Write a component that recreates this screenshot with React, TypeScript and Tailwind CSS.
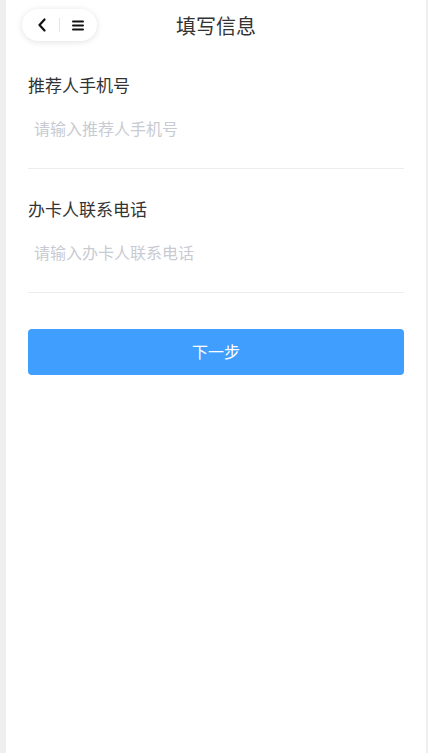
import React from "react";

const font = { fontFamily: '"Noto Sans CJK SC", "Noto Sans", sans-serif' };

function Field({ label, placeholder }: { label: string; placeholder: string }) {
  return (
    <div className="pt-[28px] pb-[18px] border-b border-[#ebedf0]">
      <div className="h-[24px] leading-[24px] text-[17px] text-[#333333]">{label}</div>
      <input
        className="mt-[9px] block h-[44px] w-full pl-[6px] text-[16px] text-[#333] outline-none bg-transparent placeholder:text-[#c8cbd2]"
        placeholder={placeholder}
        style={font}
      />
    </div>
  );
}

export default function App() {
  return (
    <div className="min-h-[753px] w-[428px] bg-[#efefef]" style={font}>
      <div className="ml-[6px] w-[420px] min-h-[753px] bg-white">
        <div className="relative flex h-[45px] items-center justify-center">
          <div className="absolute left-[16px] top-[9px] flex h-[32px] w-[75px] items-center rounded-full bg-white shadow-[0_1px_6px_rgba(0,0,0,0.12)]">
            <div className="flex w-[37px] items-center justify-center pl-[2px]">
              <svg width="10" height="14" viewBox="0 0 10 14">
                <path d="M7.5 1.5 L2.5 7 L7.5 12.5" fill="none" stroke="#111" strokeWidth="2.2" strokeLinecap="round" strokeLinejoin="round" />
              </svg>
            </div>
            <div className="h-[14px] w-px bg-[#e5e5e5]" />
            <div className="flex flex-1 items-center justify-center pr-[2px]">
              <svg width="12" height="11" viewBox="0 0 12 11">
                <path d="M1 1.5 H11 M1 5.5 H11 M1 9.5 H11" stroke="#111" strokeWidth="2" strokeLinecap="round" />
              </svg>
            </div>
          </div>
          <div className="mt-[6px] text-[20px] leading-[28px] text-[#333333]">填写信息</div>
        </div>
        <div className="px-[22px]">
          <Field label="推荐人手机号" placeholder="请输入推荐人手机号" />
          <Field label="办卡人联系电话" placeholder="请输入办卡人联系电话" />
          <button className="mt-[36px] flex h-[46px] w-full items-center justify-center rounded-[4px] bg-[#409eff] pb-[2px] text-[16px] text-white" style={font}>
            下一步
          </button>
        </div>
      </div>
    </div>
  );
}
